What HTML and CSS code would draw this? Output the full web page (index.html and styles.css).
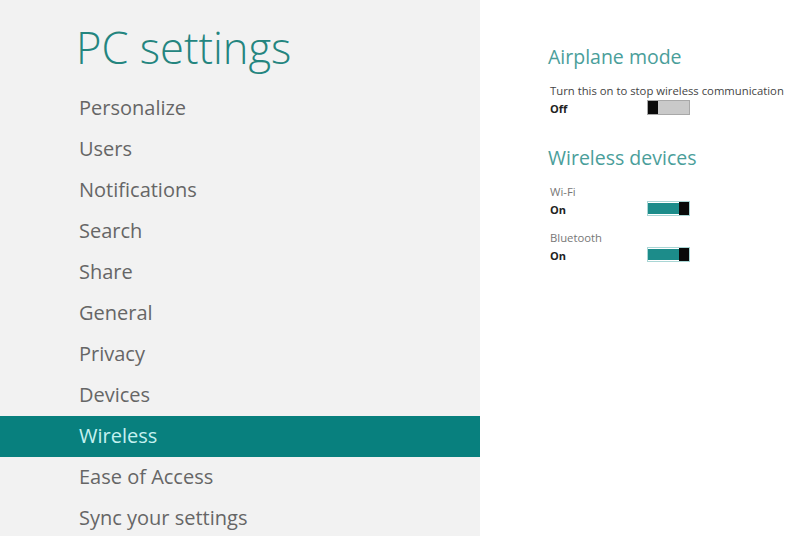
FILE: index.html
```html
<!DOCTYPE html>
<html lang="en">

<head>
	<meta charset="UTF-8">
	<meta name="viewport" content="width=device-width, initial-scale=1.0">
	<title>PC settings</title>
	<link rel="stylesheet" href="styles.css">
</head>

<body>
	<div class="layout">
		<div class="sidebar">
			<h1>PC settings</h1>
			<ul class="menu">
				<li>Personalize</li>
				<li>Users</li>
				<li>Notifications</li>
				<li>Search</li>
				<li>Share</li>
				<li>General</li>
				<li>Privacy</li>
				<li>Devices</li>
				<li class="active">Wireless</li>
				<li>Ease of Access</li>
				<li>Sync your settings</li>
			</ul>
		</div>

		<div class="content">
			<h2>Airplane mode</h2>
			<div class="desc">Turn this on to stop wireless communication</div>
			<div class="setting-row">
				<span class="state">Off</span>
				<span class="toggle off"><span class="thumb"></span></span>
			</div>

			<h2 class="section">Wireless devices</h2>
			<div class="desc muted">Wi-Fi</div>
			<div class="setting-row">
				<span class="state">On</span>
				<span class="toggle on"><span class="fill"></span><span class="thumb"></span></span>
			</div>
			<div class="desc muted next">Bluetooth</div>
			<div class="setting-row">
				<span class="state">On</span>
				<span class="toggle on"><span class="fill"></span><span class="thumb"></span></span>
			</div>
		</div>
	</div>
</body>

</html>
```

FILE: styles.css
```css
body {
	margin: 0;
	padding: 0;
	font-family: "Open Sans", "Noto Sans", sans-serif;
	background: #ffffff;
}

.layout {
	display: flex;
	height: 536px;
	overflow: hidden;
}

.sidebar {
	width: 480px;
	flex-shrink: 0;
	background-color: #f2f2f2;
}

h1 {
	margin: 23px 0 0 76px;
	font-size: 43.5px;
	line-height: 50px;
	font-weight: 300;
	color: #24857f;
}

.menu {
	list-style: none;
	margin: 15px 0 0;
	padding: 0;
}

.menu li {
	height: 41px;
	line-height: 40px;
	padding-left: 79px;
	font-size: 20px;
	color: #666;
}

.menu li.active {
	background-color: #08807e;
	color: #c4f1f0;
}

.content {
	flex: 1;
	padding-left: 68px;
}

h2 {
	margin: 45px 0 0;
	font-size: 19.5px;
	line-height: 24px;
	font-weight: 400;
	color: #4a9e9a;
}

h2.section {
	margin-top: 30px;
}

.desc {
	margin: 15px 0 0 2px;
	font-size: 11.3px;
	line-height: 14px;
	color: #444;
}

.desc.muted {
	color: #777;
}

.desc.next {
	margin-top: 14px;
}

.setting-row {
	display: flex;
	align-items: flex-start;
	margin: 2px 0 0 2px;
}

.state {
	width: 97px;
	padding-top: 2px;
	font-size: 11px;
	line-height: 14px;
	font-weight: 700;
	color: #222;
}

.toggle {
	display: flex;
	width: 43px;
	height: 15px;
	box-sizing: border-box;
	border: 1px solid #a8a8a8;
}

.toggle.off {
	background-color: #c9c9c9;
}

.toggle.on {
	border-color: #a9d6d5;
}

.toggle .fill {
	flex: 1;
	margin: 1px 0;
	background-color: #1c8c8a;
}

.thumb {
	width: 10px;
	background-color: #0a0a0a;
}
```
